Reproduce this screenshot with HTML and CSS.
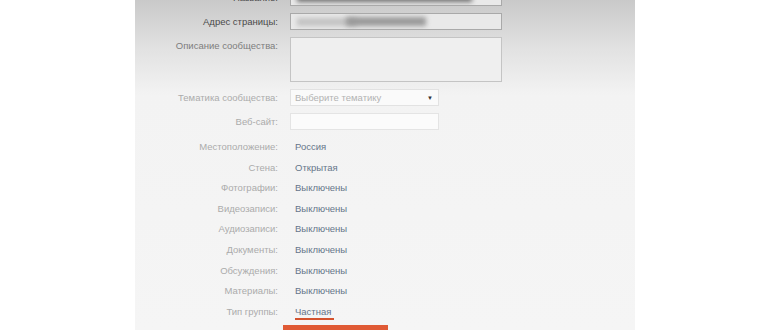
FILE: index.html
```html
<!DOCTYPE html>
<html lang="ru">

<head>
  <meta charset="UTF-8" />
  <meta name="viewport" content="width=device-width, initial-scale=1.0" />
  <title>Настройки сообщества</title>
  <link rel="stylesheet" href="styles.css">
</head>

<body>

  <div class="panel">
    <div class="fields">
      <label class="label label-dark">Название:</label>
      <div class="input input-dark"><span class="blur blur-name"></span></div>

      <label class="label label-dark">Адрес страницы:</label>
      <div class="input input-dark"><span class="blur blur-addr"></span><span class="blur blur-addr2"></span></div>

      <label class="label label-mid">Описание сообщества:</label>
      <div class="input textarea"></div>

      <label class="label">Тематика сообщества:</label>
      <div class="input select short">
        <span class="placeholder">Выберите тематику</span>
        <span class="arrow">&#9660;</span>
      </div>

      <label class="label">Веб-сайт:</label>
      <div class="input short light"></div>
    </div>

    <div class="options">
      <span class="label">Местоположение:</span><span class="value">Россия</span>
      <span class="label">Стена:</span><span class="value">Открытая</span>
      <span class="label">Фотографии:</span><span class="value">Выключены</span>
      <span class="label">Видеозаписи:</span><span class="value">Выключены</span>
      <span class="label">Аудиозаписи:</span><span class="value">Выключены</span>
      <span class="label">Документы:</span><span class="value">Выключены</span>
      <span class="label">Обсуждения:</span><span class="value">Выключены</span>
      <span class="label">Материалы:</span><span class="value">Выключены</span>
      <span class="label">Тип группы:</span><span class="value"><span class="marked">Частная</span></span>
      <span></span><div class="save"></div>
    </div>
  </div>

</body>

</html>
```

FILE: styles.css
```css
body {
  margin: 0;
  background: #ffffff;
  font-family: "Liberation Sans", Arial, sans-serif;
  font-size: 9.5px;
  overflow: hidden;
}

/* Серая панель формы */
.panel {
  width: 500px;
  height: 330px;
  margin-left: 135px;
  background: linear-gradient(#c9c9c9 0, #e2e2e2 50px, #f3f3f3 95px, #f5f5f5 100%);
  overflow: hidden;
}

.fields {
  display: grid;
  grid-template-columns: 143px 212px;
  column-gap: 12px;
  row-gap: 7px;
  margin-top: -11px;
}

.label {
  text-align: right;
  color: #ababab;
  line-height: 17px;
  white-space: nowrap;
}

.label-dark {
  color: #4a4a4a;
}

.label-mid {
  color: #7d7d7d;
}

.input {
  position: relative;
  box-sizing: border-box;
  height: 17px;
  border: 1px solid #d4d4d4;
  background: #f7f7f7;
  overflow: hidden;
}

.input-dark {
  border-color: #a9a9a9;
  background: #e9e9e9;
}

.textarea {
  height: 45px;
  border-color: #c4c4c4;
  background: #efefef;
}

.short {
  width: 149px;
}

.light {
  border-color: #e4e4e4;
  background: #fbfbfb;
}

.select {
  display: flex;
  align-items: center;
  justify-content: space-between;
  padding: 0 5px 0 4px;
  border-color: #e2e2e2;
  background: #fafafa;
}

.placeholder {
  color: #b3b3b3;
}

.arrow {
  font-size: 6px;
  color: #333333;
}

/* Размытые значения */
.blur {
  position: absolute;
  display: block;
  filter: blur(2.5px);
}

.blur-name {
  left: 6px;
  top: 2px;
  width: 175px;
  height: 10px;
  background: #6f6f6f;
}

.blur-addr {
  left: 6px;
  top: 4px;
  width: 60px;
  height: 8px;
  background: #c2c2c2;
}

.blur-addr2 {
  left: 55px;
  top: 3px;
  width: 80px;
  height: 9px;
  background: #999999;
}

/* Список настроек */
.options {
  display: grid;
  grid-template-columns: 143px 212px;
  column-gap: 12px;
  margin-top: 7px;
  line-height: 20.6px;
}

.options .label {
  line-height: 20.6px;
}

.value {
  padding-left: 5px;
  color: #66768a;
}

.marked {
  display: inline-block;
  line-height: 13px;
  border-bottom: 2px solid #d4532f;
  padding-right: 3px;
}

.save {
  width: 105px;
  height: 8px;
  margin-left: -7px;
  margin-top: 3px;
  background: #e05a35;
}
```
